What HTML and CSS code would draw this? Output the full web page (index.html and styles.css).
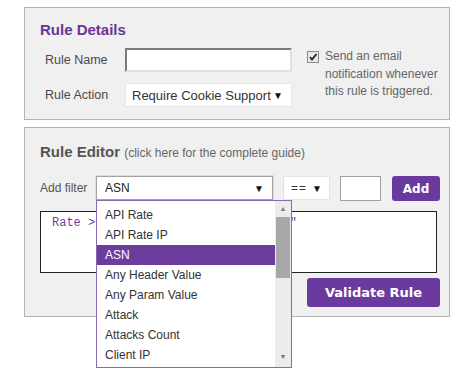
FILE: index.html
```html
<!DOCTYPE html>
<html lang="en">

<head>
    <meta charset="UTF-8">
    <meta name="viewport" content="width=device-width, initial-scale=1.0">
    <title>Rule Editor</title>
    <link rel="stylesheet" href="styles.css">
</head>

<body>

    <div class="panel details">
        <h2 class="panel-title">Rule Details</h2>
        <div class="details-body">
            <div class="details-form">
                <label for="ruleName">Rule Name</label>
                <input type="text" id="ruleName" class="text-input">
                <label>Rule Action</label>
                <div class="select action-select">Require Cookie Support <span class="caret">&#9660;</span></div>
            </div>
            <div class="notify">
                <span class="checkbox">
                    <svg width="10" height="10" viewBox="0 0 10 10">
                        <path d="M2 5 L4 7.5 L8.5 2" fill="none" stroke="#222" stroke-width="1.8" />
                    </svg>
                </span>
                <span class="notify-text">Send an email notification whenever this rule is triggered.</span>
            </div>
        </div>
    </div>

    <div class="panel editor">
        <h2 class="panel-title editor-title">Rule Editor <span class="guide">(click here for the complete guide)</span></h2>

        <div class="filter-row">
            <span class="filter-label">Add filter</span>
            <div class="select field-select">
                ASN <span class="caret">&#9660;</span>
                <!-- open dropdown -->
                <div class="dropdown">
                    <ul class="options">
                        <li>API Rate</li>
                        <li>API Rate IP</li>
                        <li class="active">ASN</li>
                        <li>Any Header Value</li>
                        <li>Any Param Value</li>
                        <li>Attack</li>
                        <li>Attacks Count</li>
                        <li>Client IP</li>
                    </ul>
                    <div class="scrollbar">
                        <span class="arrow up">&#9650;</span>
                        <span class="thumb"></span>
                        <span class="arrow down">&#9660;</span>
                    </div>
                </div>
            </div>
            <div class="select op-select"><span class="op">==</span> <span class="caret">&#9660;</span></div>
            <input type="text" class="value-input">
            <button class="btn btn-small">Add</button>
        </div>

        <textarea class="rule-text">Rate > 50 and Path contains "/api"</textarea>

        <div class="actions">
            <button class="btn btn-large">Validate Rule</button>
        </div>
    </div>

</body>

</html>
```

FILE: styles.css
```css
html {
    height: 100%;
}

body {
    margin: 0;
    min-height: 370px;
    box-sizing: border-box;
    padding: 7px 0 0 24px;
    background: #fff;
    font-family: "Liberation Sans", Arial, sans-serif;
    font-size: 12px;
    color: #555;
}

.panel {
    width: 424px;
    border: 1px solid #b4b4b4;
    background-color: #f0f0f0;
    box-sizing: content-box;
}

.details {
    padding: 12px 0 12px 0;
}

.editor {
    margin-top: 7px;
    padding: 14px 0 9px 0;
    position: relative;
}

.panel-title {
    margin: 0 0 0 15px;
    height: 19px;
    font-size: 15px;
    line-height: 19px;
    font-weight: bold;
    color: #6a3496;
}

.editor-title {
    color: #555;
    margin-bottom: 1px;
}

.guide {
    font-size: 12px;
    line-height: 12px;
    font-weight: normal;
    color: #666;
}

.details-body {
    display: flex;
    margin: 9px 0 0 20px;
}

.details-form {
    display: grid;
    grid-template-columns: 80px 167px;
    row-gap: 11px;
    align-items: center;
}

.details-form label {
    font-size: 12.5px;
    color: #4a4a4a;
}

.text-input {
    box-sizing: border-box;
    width: 167px;
    height: 24px;
    margin: 0;
    border: 2px solid #e2e2e2;
    border-top-color: #7a7a7a;
    border-left-color: #7a7a7a;
    background: #fff;
}

.select {
    box-sizing: border-box;
    height: 24px;
    display: flex;
    align-items: center;
    justify-content: space-between;
    background: #fff;
    color: #222;
    position: relative;
}

.caret {
    font-size: 10px;
    color: #111;
}

.action-select {
    border: 1px solid #e6e6e6;
    padding: 0 8px 0 6px;
    font-size: 13px;
    color: #333;
}

.notify {
    display: flex;
    align-items: flex-start;
    margin-left: 15px;
}

.checkbox {
    box-sizing: border-box;
    width: 12px;
    height: 12px;
    margin-top: 3px;
    border: 1px solid #8a8a8a;
    background: #e8e8e8;
    display: flex;
    align-items: center;
    justify-content: center;
}

.notify-text {
    margin-left: 6px;
    width: 118px;
    line-height: 17.5px;
    color: #666;
}

.filter-row {
    display: flex;
    align-items: flex-start;
    margin: 15px 0 0 15px;
    height: 25px;
}

.filter-label {
    width: 56px;
    line-height: 24px;
    color: #555;
}

.field-select {
    width: 177px;
    margin-right: 10px;
    padding: 0 8px 0 8px;
    border: 1px solid #a3a3a3;
    box-shadow: 0 0 0 1px #dcdcdc;
    font-size: 12px;
}

.op-select {
    width: 47px;
    margin-right: 10px;
    padding: 0 7px 0 7px;
    border: 1px solid #e3e3e3;
    font-size: 12px;
    color: #333;
}

.op {
    letter-spacing: 1px;
}

.value-input {
    box-sizing: border-box;
    width: 41px;
    height: 25px;
    margin: 0 11px 0 0;
    border: 1px solid #a0a0a0;
    background: #fff;
}

.btn {
    background-color: #6b3a9e;
    color: white;
    border: none;
    border-radius: 3px;
    font-family: "DejaVu Sans", Verdana, sans-serif;
    font-weight: bold;
    cursor: pointer;
    padding: 0;
}

.btn-small {
    width: 48px;
    height: 25px;
    font-size: 12px;
}

.btn-large {
    width: 133px;
    height: 29px;
    font-size: 13px;
}

.rule-text {
    display: block;
    box-sizing: border-box;
    width: 397px;
    height: 62px;
    margin: 10px 0 0 15px;
    padding: 4px 11px;
    border: 1px solid #222;
    background: #fff;
    resize: none;
    font-family: "Liberation Mono", monospace;
    font-size: 12px;
    line-height: 14px;
    color: #7a3ea8;
}

.actions {
    display: flex;
    justify-content: flex-end;
    margin: 5px 9px 0 0;
}

/* open dropdown of the filter select */
.dropdown {
    position: absolute;
    top: 23px;
    left: -1px;
    width: 196px;
    height: 168px;
    box-sizing: border-box;
    border: 1px solid #8769b0;
    background: #fff;
    z-index: 5;
}

.options {
    list-style: none;
    margin: 0;
    padding: 4px 16px 0 0;
}

.options li {
    height: 20px;
    line-height: 20px;
    padding-left: 8px;
    color: #333;
    font-size: 12px;
}

.options li.active {
    background-color: #6c3d9f;
    color: #fff;
}

.scrollbar {
    position: absolute;
    top: 0;
    right: 0;
    bottom: 0;
    width: 16px;
    background: #ececec;
    display: flex;
    flex-direction: column;
    align-items: center;
}

.arrow {
    height: 16px;
    line-height: 16px;
    font-size: 7px;
    color: #777;
}

.thumb {
    width: 14px;
    height: 61px;
    background: #a8a8a8;
    flex-shrink: 0;
}

.arrow.down {
    margin-top: auto;
    line-height: 20px;
    height: 20px;
}
```
